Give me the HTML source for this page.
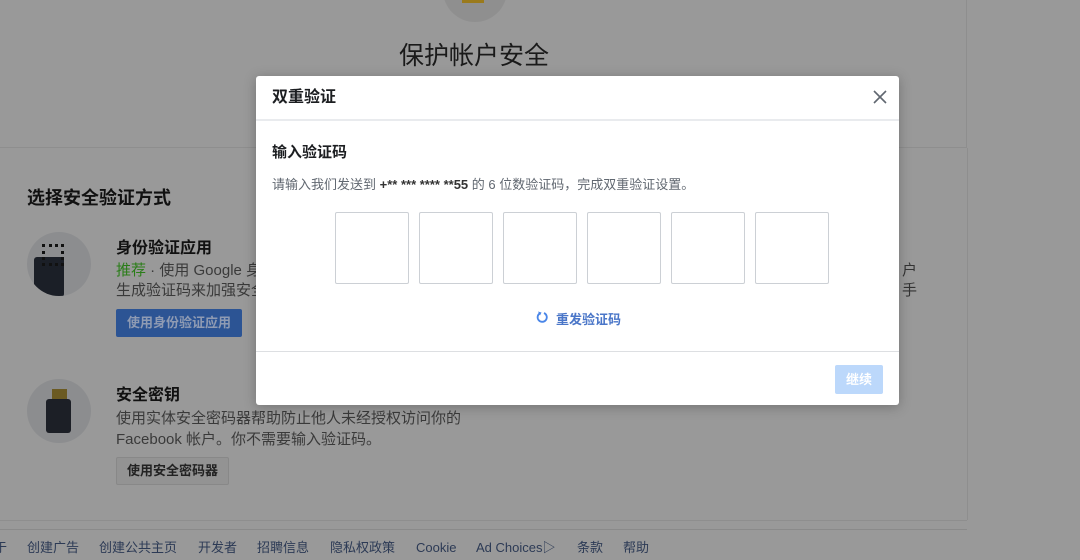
<!DOCTYPE html>
<html><head><meta charset="utf-8"><style>
*{margin:0;padding:0;box-sizing:border-box}
body{width:1080px;height:560px;overflow:hidden;background:#999;font-family:"Liberation Sans","Noto Sans CJK SC",sans-serif;position:relative;color:#1c1e21}
.a{position:absolute}
.modal{left:256px;top:76px;width:643px;height:329px;background:#fff;border-radius:3px;box-shadow:0 2px 12px rgba(0,0,0,.25)}
.box{position:absolute;top:136px;width:74px;height:72px;border:1px solid #ccd0d5;border-radius:2px}
.f{position:absolute;top:539px;height:18px;line-height:18px;font-size:13px;color:#2c3a55;white-space:nowrap}
</style></head><body>
<div class="a" style="left:0;top:0;width:967px;height:148px;border-bottom:1px solid #8e8e8e;border-right:1px solid #8e8e8e"></div>
<div class="a" style="left:967px;top:148px;width:1px;height:372px;background:#8e8e8e"></div>
<div class="a" style="left:0;top:520px;width:967px;height:1px;background:#8e8e8e"></div>
<div class="a" style="left:0;top:529px;width:967px;height:1px;background:#8a8a8a"></div>
<div class="a" style="left:443px;top:-42px;width:64px;height:64px;border-radius:50%;background:#8f8f8f"></div>
<div class="a" style="left:462px;top:0;width:22px;height:3px;background:#9a7a1c"></div>
<div class="a" style="left:399px;top:36px;font-size:25px;color:#1a1a1a">保护帐户安全</div>
<div class="a" style="left:27px;top:184px;font-size:18px;font-weight:bold;color:#111">选择安全验证方式</div>

<div class="a" style="left:27px;top:232px;width:64px;height:64px;border-radius:50%;background:#8c8d8f;overflow:hidden">
 <div class="a" style="left:7px;top:25px;width:30px;height:40px;background:#1b1f27;border-radius:3px"></div>
 <div class="a" style="left:15px;top:12px;width:22px;height:22px;border:3px dotted #111"></div>
</div>
<div class="a" style="left:116px;top:234px;font-size:16px;font-weight:bold;color:#111">身份验证应用</div>
<div class="a" style="left:116px;top:261px;font-size:15px;color:#3a3a3a;line-height:20px"><span style="color:#2a7d18">推荐</span> · 使用 Google 身<br>生成验证码来加强安全</div>
<div class="a" style="left:116px;top:309px;width:126px;height:28px;background:#2c5494;border-radius:2px;color:#8f9bb3;font-size:13px;font-weight:bold;line-height:28px;text-align:center">使用身份验证应用</div>
<div class="a" style="left:902px;top:261px;font-size:15px;color:#333;line-height:20px">户<br>手</div>

<div class="a" style="left:27px;top:379px;width:64px;height:64px;border-radius:50%;background:#8c8d8f">
 <div class="a" style="left:25px;top:10px;width:15px;height:10px;background:#6b5a22"></div>
 <div class="a" style="left:19px;top:20px;width:25px;height:34px;background:#1c1f26;border-radius:3px"></div>
</div>
<div class="a" style="left:116px;top:381px;font-size:16px;font-weight:bold;color:#111">安全密钥</div>
<div class="a" style="left:116px;top:408px;font-size:15px;color:#3a3a3a;line-height:21px">使用实体安全密码器帮助防止他人未经授权访问你的<br>Facebook 帐户。你不需要输入验证码。</div>
<div class="a" style="left:116px;top:457px;width:113px;height:28px;border:1px solid #888;background:#939393;border-radius:2px;font-size:13px;font-weight:bold;color:#222;line-height:26px;text-align:center">使用安全密码器</div>

<div class="f" style="left:-6px">于</div>
<div class="f" style="left:27px">创建广告</div>
<div class="f" style="left:99px">创建公共主页</div>
<div class="f" style="left:198px">开发者</div>
<div class="f" style="left:257px">招聘信息</div>
<div class="f" style="left:330px">隐私权政策</div>
<div class="f" style="left:416px">Cookie</div>
<div class="f" style="left:476px">Ad Choices&#9655;</div>
<div class="f" style="left:577px">条款</div>
<div class="f" style="left:623px">帮助</div>

<div class="a modal">
 <div class="a" style="left:16px;top:12px;font-size:16px;font-weight:bold;color:#1c1e21;line-height:20px">双重验证</div>
 <svg class="a" style="left:617px;top:14px" width="14" height="14" viewBox="0 0 14 14"><path d="M1 1L13 13M13 1L1 13" stroke="#606770" stroke-width="1.6"/></svg>
 <div class="a" style="left:0;top:43px;width:643px;height:2px;background:#e9ebee"></div>
 <div class="a" style="left:16px;top:65px;font-size:15px;font-weight:bold;color:#1c1e21">输入验证码</div>
 <div class="a" style="left:16px;top:98px;font-size:13px;color:#606770">请输入我们发送到 <b style="color:#333">+** *** **** **55</b> 的 6 位数验证码，完成双重验证设置。</div>
 <div class="box" style="left:79px"></div><div class="box" style="left:163px"></div><div class="box" style="left:247px"></div><div class="box" style="left:331px"></div><div class="box" style="left:415px"></div><div class="box" style="left:499px"></div>
 <svg class="a" style="left:280px;top:234px" width="13" height="14" viewBox="0 0 13 14"><path d="M4 3.2A4.6 4.6 0 1 0 8 3" fill="none" stroke="#4a86e8" stroke-width="1.8"/><path d="M2 1.5L5.5 2.5L4 5.5Z" fill="#4a86e8"/></svg>
 <div class="a" style="left:300px;top:233px;font-size:13px;font-weight:bold;color:#4a76c8">重发验证码</div>
 <div class="a" style="left:0;top:275px;width:643px;height:1px;background:#dddfe2"></div>
 <div class="a" style="left:579px;top:289px;width:48px;height:29px;background:#bcd8fb;border-radius:2px;color:#fff;font-size:13px;font-weight:bold;line-height:29px;text-align:center">继续</div>
</div>
</body></html>
